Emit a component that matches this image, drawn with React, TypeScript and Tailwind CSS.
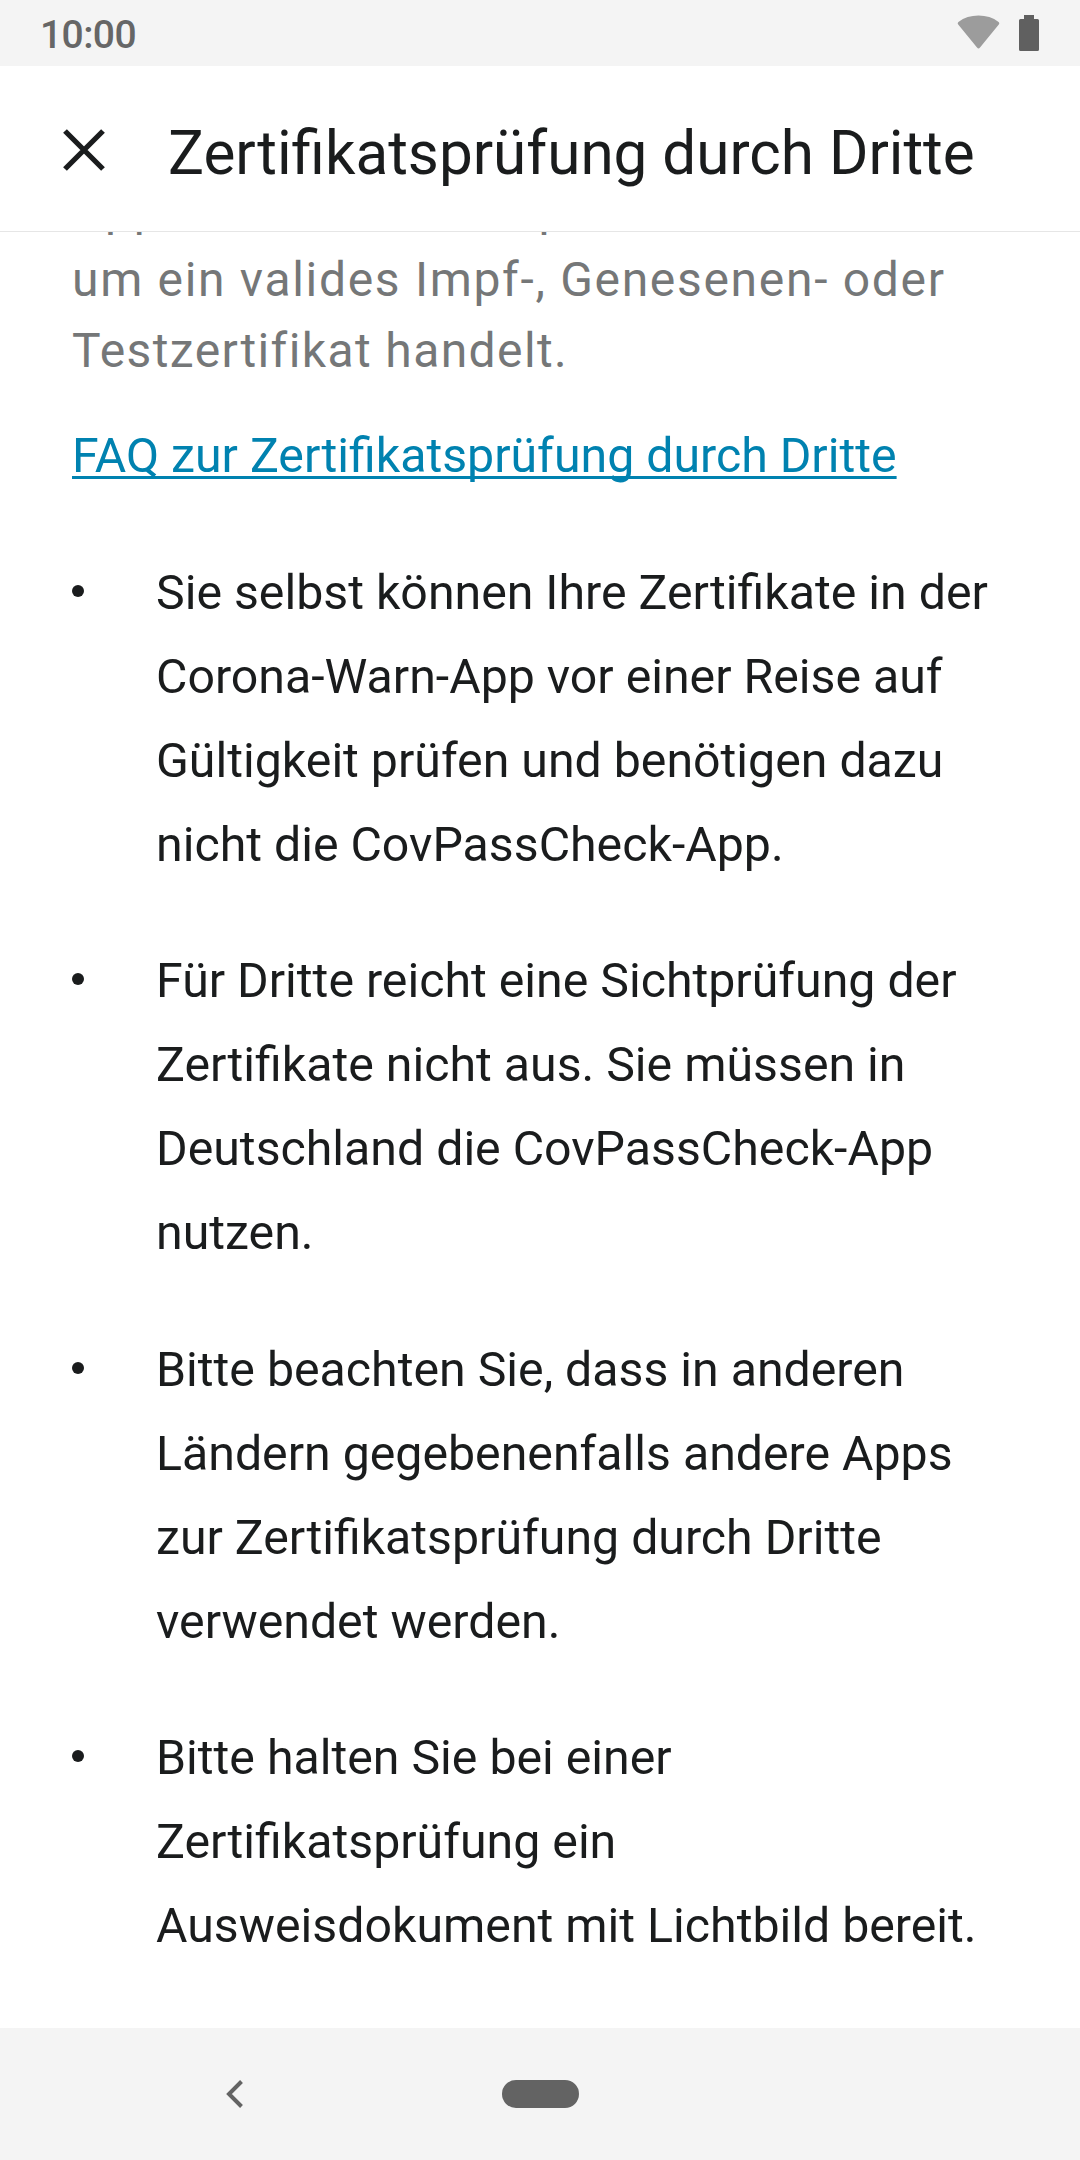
const items = [
  ['Sie selbst können Ihre Zertifikate in der', 'Corona-Warn-App vor einer Reise auf', 'Gültigkeit prüfen und benötigen dazu', 'nicht die CovPassCheck-App.'],
  ['Für Dritte reicht eine Sichtprüfung der', 'Zertifikate nicht aus. Sie müssen in', 'Deutschland die CovPassCheck-App', 'nutzen.'],
  ['Bitte beachten Sie, dass in anderen', 'Ländern gegebenenfalls andere Apps', 'zur Zertifikatsprüfung durch Dritte', 'verwendet werden.'],
  ['Bitte halten Sie bei einer', 'Zertifikatsprüfung ein', 'Ausweisdokument mit Lichtbild bereit.'],
];

export default function App() {
  return (
    <div className="flex h-[2160px] w-[1080px] flex-col overflow-hidden bg-white font-[Roboto,sans-serif] text-[#1a1c1d]">
      <div className="flex h-[66px] shrink-0 items-center justify-between bg-[#f4f4f4] pl-[40px] pr-[41px]">
        <span className="pt-[3px] text-[39px] font-medium leading-[46px] tracking-[-0.6px] text-[#666]">10:00</span>
        <div className="flex items-center gap-[19px]">
          <svg className="h-[36px] w-[43px]" viewBox="0 0 43 36"><path d="M1.2 9.4Q0 8 1.4 6.9Q10 .6 21.5 .6T41.6 6.9Q43 8 41.8 9.4L23 32.6Q21.5 34.4 20 32.6Z" fill="#9c9c9c" /></svg>
          <svg className="h-[36px] w-[20px]" viewBox="0 0 20 36"><path d="M5 0h10v4h3.500Q20 4 20 5.500V34.500Q20 36 18.500 36H1.500Q0 36 0 34.500V5.500Q0 4 1.500 4H5Z" fill="#606060" /></svg>
        </div>
      </div>
      <header className="flex h-[166px] shrink-0 items-center border-b border-[#e6e6e6] pl-[63px]">
        <svg className="mt-[3px] h-[42px] w-[42px]" viewBox="0 0 42 42"><path d="M2 2L40 40M40 2L2 40" stroke="#1a1c1d" strokeWidth="5.3" /></svg>
        <h1 className="ml-[63px] mt-[11px] whitespace-nowrap text-[60.2px] leading-[70px]">Zertifikatsprüfung durch Dritte</h1>
      </header>
      <main className="flex h-[1796px] shrink-0 flex-col overflow-hidden pl-[72px]">
        <div className="-mt-[59px] whitespace-nowrap text-[48px] leading-[71px] text-[#757778]">
          <p className="tracking-[1.69px] [word-spacing:4px]">App können andere prüfen, ob es sich</p>
          <p className="tracking-[1.69px]">um ein valides Impf-, Genesenen- oder</p>
          <p className="tracking-[1.4px]">Testzertifikat handelt.</p>
        </div>
        <a className="mt-[40px] whitespace-nowrap text-[48.25px] leading-[60px] text-[#0082b0] underline decoration-[3px] underline-offset-[4px] [text-decoration-skip-ink:none]">FAQ zur Zertifikatsprüfung durch Dritte</a>
        <ul className="mt-[65px] flex flex-col gap-[52.4px]">
          {items.map((lines) => (
            <li key={lines[0]} className="flex text-[48.25px] leading-[84px]">
              <span className="mr-[72px] mt-[34px] h-[12px] w-[12px] rounded-full bg-[#1a1c1d]" />
              <div className="whitespace-nowrap">{lines.map((line) => <p key={line}>{line}</p>)}</div>
            </li>
          ))}
        </ul>
      </main>
      <nav className="flex h-[132px] shrink-0 items-center bg-[#f4f4f4]">
        <svg className="ml-[226px] h-[28px] w-[18px]" viewBox="0 0 18 28"><path d="M15.500 1.500L3 14l12.500 12.500" fill="none" stroke="#636363" strokeWidth="4" /></svg>
        <div className="ml-[258px] h-[28px] w-[77px] rounded-full bg-[#636363]" />
      </nav>
    </div>
  );
}
